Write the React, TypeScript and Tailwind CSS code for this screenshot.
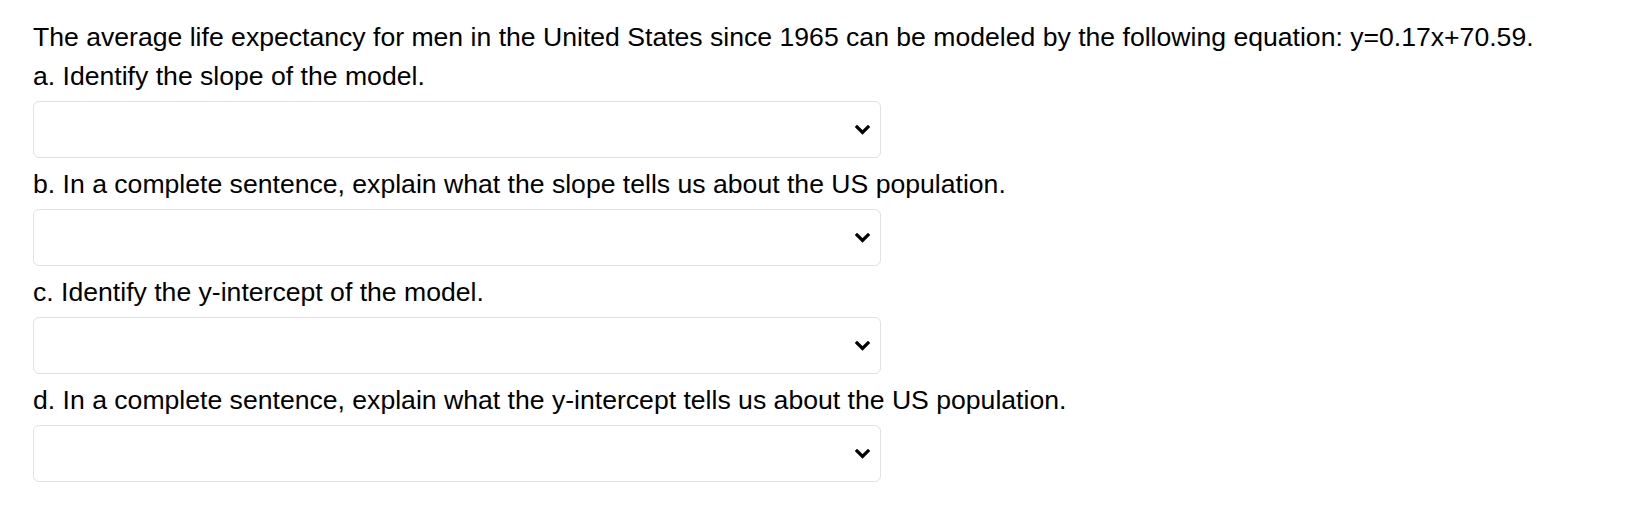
import React from "react";

const Chevron = () => (
  <svg width="15" height="10" viewBox="0 0 15 10" className="mr-[10px]">
    <path d="M2 2 L7.5 7.5 L13 2" fill="none" stroke="#000" strokeWidth="3.2" strokeLinecap="square" />
  </svg>
);

const Select = () => (
  <div className="mt-[10px] flex h-[57px] w-[848px] items-center justify-end rounded-[6px] border border-[#e1e1e1] bg-white">
    <Chevron />
  </div>
);

const items = [
  "a. Identify the slope of the model.",
  "b. In a complete sentence, explain what the slope tells us about the US population.",
  "c. Identify the y-intercept of the model.",
  "d. In a complete sentence, explain what the y-intercept tells us about the US population.",
];

export default function App() {
  return (
    <div
      className="h-[506px] w-[1632px] bg-white pl-[33px] pt-[22px] text-[26.6px] leading-[30px] text-black"
      style={{ fontFamily: '"Liberation Sans", Arial, sans-serif' }}
    >
      <p>
        The average life expectancy for men in the United States since 1965 can be modeled by the following equation: y=0.17x+70.59.
      </p>
      {items.map((t, i) => (
        <div key={i} className={i === 0 ? "mt-[9px]" : "mt-[11px]"}>
          <p>{t}</p>
          <Select />
        </div>
      ))}
    </div>
  );
}
